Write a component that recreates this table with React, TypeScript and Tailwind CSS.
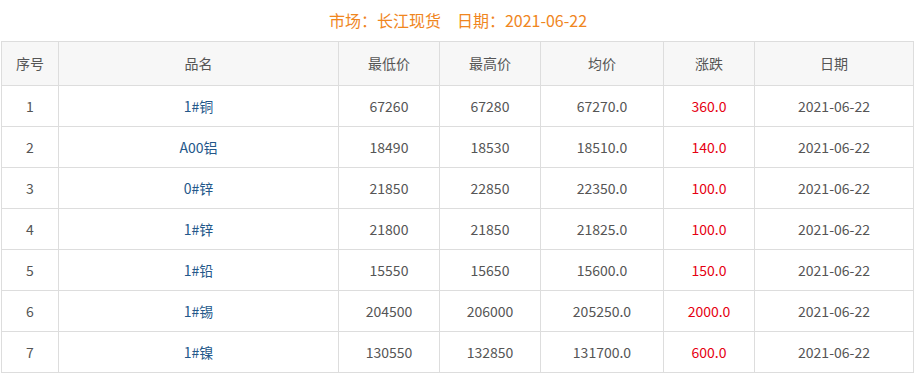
import React from "react";

const rows = [
  ["1", "1#铜", "67260", "67280", "67270.0", "360.0"],
  ["2", "A00铝", "18490", "18530", "18510.0", "140.0"],
  ["3", "0#锌", "21850", "22850", "22350.0", "100.0"],
  ["4", "1#锌", "21800", "21850", "21825.0", "100.0"],
  ["5", "1#铅", "15550", "15650", "15600.0", "150.0"],
  ["6", "1#锡", "204500", "206000", "205250.0", "2000.0"],
  ["7", "1#镍", "130550", "132850", "131700.0", "600.0"],
];

export default function App() {
  const font = { fontFamily: '"Noto Sans CJK SC", "Microsoft YaHei", sans-serif' };
  return (
    <div className="w-[916px] h-[375px] bg-white overflow-hidden" style={font}>
      <div className="h-[41px] flex items-center justify-center text-[16px] text-[#f0861e] pb-[1px]">
        <span>市场：长江现货</span>
        <span className="ml-[16px]">日期：2021-06-22</span>
      </div>
      <table className="ml-[1px] w-[912px] border-collapse text-[14px] text-[#555] table-fixed">
        <colgroup>
          <col className="w-[57px]" />
          <col className="w-[280px]" />
          <col className="w-[101px]" />
          <col className="w-[101px]" />
          <col className="w-[123px]" />
          <col className="w-[91px]" />
          <col className="w-[159px]" />
        </colgroup>
        <thead>
          <tr className="h-[44px] bg-[#f7f7f7]">
            {["序号", "品名", "最低价", "最高价", "均价", "涨跌", "日期"].map((h) => (
              <th key={h} className="border border-[#dddddd] font-normal text-center">
                {h}
              </th>
            ))}
          </tr>
        </thead>
        <tbody>
          {rows.map((r) => (
            <tr key={r[0]} className="h-[41px]">
              <td className="border border-[#dddddd] text-center">{r[0]}</td>
              <td className="border border-[#dddddd] text-center text-[#24588a]">{r[1]}</td>
              <td className="border border-[#dddddd] text-center">{r[2]}</td>
              <td className="border border-[#dddddd] text-center">{r[3]}</td>
              <td className="border border-[#dddddd] text-center">{r[4]}</td>
              <td className="border border-[#dddddd] text-center text-[#e60012]">{r[5]}</td>
              <td className="border border-[#dddddd] text-center">2021-06-22</td>
            </tr>
          ))}
        </tbody>
      </table>
    </div>
  );
}
